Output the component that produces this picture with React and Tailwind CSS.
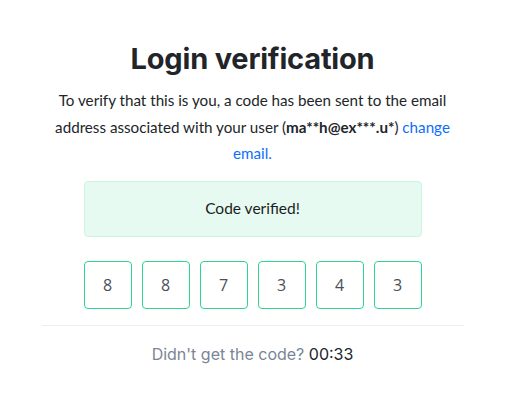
const digits = ["8", "8", "7", "3", "4", "3"];

const App = () => {
  return (
    <div className="min-h-[411px] w-full bg-white" style={{ fontFamily: "Lato, sans-serif" }}>
      <div className="mx-auto flex w-[422px] flex-col items-center pt-[39px]">
        <h1 className="font-['Inter',sans-serif] text-[29px] font-bold leading-[40px] tracking-[-0.2px] text-[#212529]">
          Login verification
        </h1>

        <p className="mt-[8px] w-[412px] text-center text-[15.2px] leading-[26.5px] text-[#212529]">
          To verify that this is you, a code has been sent to the email
          address associated with your user (<b>ma**h@ex***.u*</b>){" "}
          <a href="#" className="text-[#0d6efd]">
            change email.
          </a>
        </p>

        <div className="mt-[14px] flex h-[56px] w-[338px] items-center justify-center rounded-[4px] border border-[#c9f5e2] bg-[#e7faf2] text-[15.5px] text-[#1a1d21]">
          Code verified!
        </div>

        <div className="mt-[24px] flex gap-[10px]">
          {digits.map((d, i) => (
            <div
              key={i}
              className="flex h-[48px] w-[48px] items-center justify-center rounded-[4px] border border-[#2ed48f] font-['Open_Sans',sans-serif] text-[16px] text-[#495057]"
            >
              {d}
            </div>
          ))}
        </div>

        <div className="mt-[16px] h-px w-full bg-[#eeeeee]" />

        <p className="mt-[16px] font-['Inter',sans-serif] text-[16px] text-[#7a8596]">
          Didn&apos;t get the code? <span className="text-[#212529]">00:33</span>
        </p>
      </div>
    </div>
  );
};

export default App;
